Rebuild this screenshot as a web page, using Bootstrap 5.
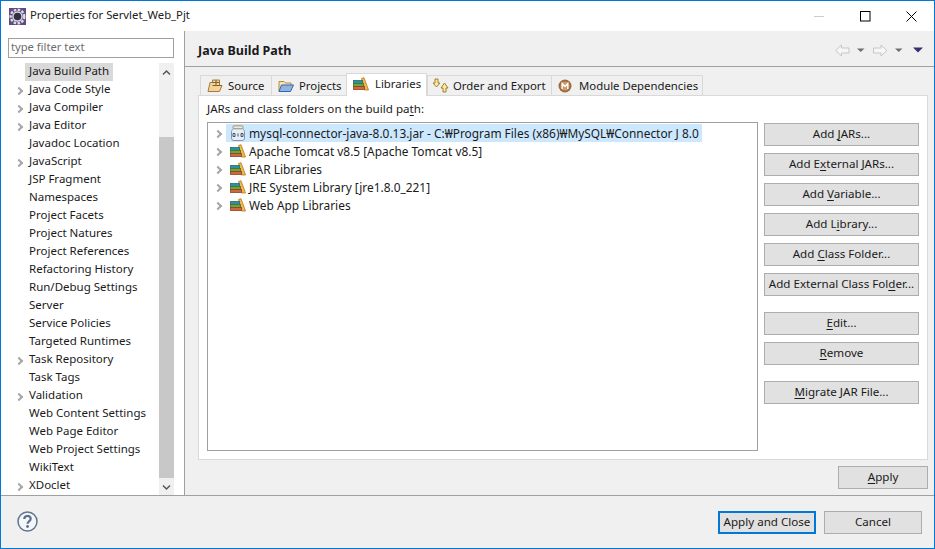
<!doctype html>
<html><head><meta charset="utf-8"><title>Properties</title>
<link href="https://cdn.jsdelivr.net/npm/bootstrap@5.3.0/dist/css/bootstrap.min.css" rel="stylesheet">
<style>
html,body{height:100%;overflow:hidden}
body{font-family:"Noto Sans","Liberation Sans",sans-serif;font-size:11.6px;color:#1a1a1a;background:#f0f0f0;line-height:18px}
.win{width:935px;height:549px;border:1px solid #0078d7}
.tbar{height:30px;background:#fff;padding-left:8px}
.ttl{margin-left:4px;margin-bottom:2px;font-size:11.3px;color:#222}
.wbtn{width:46px;height:30px}
.mainrow{height:465px;border-bottom:1px solid #a0a0a0}
.side{width:184px;background:#fff;border-right:1px solid #a0a0a0;padding:7px 10px 0 7px}
.flt{height:20px;border:1px solid #a0a0a0;padding:0 2px;font-size:11.2px;line-height:15px;color:#6d6d6d;background:#fff}
.treewrap{margin-top:5px;height:432px;overflow:hidden}
.stree{width:150px}
.srow{height:18px;line-height:16px;font-size:11.5px;white-space:nowrap;padding-left:4px;margin-left:17px;position:relative}
.srow.has::before,.trow::before{content:"";position:absolute;width:6px;height:6px;border-top:2px solid #a6a6a6;border-right:2px solid #a6a6a6;transform:rotate(45deg)}
.srow.has::before{left:-9px;top:7px}
.slbl{display:inline-block;padding:0 4px;margin-left:-4px;height:18px}
.srow.sel .slbl{background:#d9d9d9}
.sbar{width:15px;background:#f0f0f0}
.sbtn{height:18px}
.sspace{height:56px}
.sthumb{height:341px;background:#c8c8c8}
.content{flex:1;min-width:0}
.chead{height:36px;border-bottom:1px solid #a0a0a0;padding:3px 11px 0 13px}
.chead h1{font-size:12.5px;font-weight:700;margin:2px 0 0;line-height:18px}
.tabarea{padding:6px 6px 0 13px}
.tabsrow{height:22px;padding-left:2px;align-items:flex-end}
.tabx{height:20px;font-size:11.35px;border:1px solid #d9d9d9;border-bottom:0;border-right:0;display:flex;align-items:center;padding-left:6px;gap:5px;white-space:nowrap}
.tabx.act{height:23px;background:#fff;border:1px solid #d9d9d9;border-bottom:0;margin-bottom:-1px;position:relative;z-index:2;padding-bottom:3px;gap:6px}
.tw1{width:71px}.tw2{width:75px}.tw3{width:81px}
.tabx.tw4{width:124px;padding-left:4px;gap:4px}
.tabx.tw5{width:152px;border-right:1px solid #d9d9d9;gap:7px}
.panel{height:365px;background:#fff;border:1px solid #d9d9d9;padding:4px 8px 8px 8px}
.plabel{height:22px;line-height:18px}
.ul{text-decoration:underline;text-underline-offset:2px;text-decoration-thickness:1px}
.libbox{width:551px;height:329px;border:1px solid #a0a0a0;background:#fff;padding-top:1px;margin-right:6px;font-size:11.9px}
.trow{height:18px;position:relative;padding-left:18px;white-space:nowrap;display:flex;align-items:center}
.trow::before{left:7px;top:7px}
.trow .tx{display:flex;align-items:center;height:18px;padding:0 3px 0 4px;gap:3px}
.trow.sel .tx{background:#cce8ff}
.trow svg{flex:none}
.btncol{width:155px;padding-top:1px}
.ebtn{border-radius:0;background:#e1e1e1;border:1px solid #adadad;color:#1a1a1a;font-size:11.6px;line-height:15px;height:23px;padding:1px 0 3px;display:block;width:100%;white-space:nowrap;font-family:inherit}
.ebtn:hover{background:#e1e1e1;border-color:#adadad;color:#1a1a1a}
.gap7{margin-bottom:7px}
.gap16{margin-bottom:16px}
.applyrow{padding-top:6px}
.ebtn.wap{width:90px}
.foot{height:52px;padding:15px 12px 0 16px}
.ebtn.fb{width:98px}
.ebtn.def{border:2px solid #0078d7;padding:0 0 2px;margin-right:8px}
</style></head>
<body>
<svg width="0" height="0" class="position-absolute">
 <defs>
  <symbol id="books" viewBox="0 0 16 14">
   <path d="M8.500 1.500l2.500-.8 4.500 12.300h-4z" fill="#f5b84a" stroke="#b07a20" stroke-width=".8"/>
   <rect x=".5" y="3.500" width="9" height="3" fill="#2f8f9f" stroke="#266a78" stroke-width=".8"/>
   <rect x=".5" y="6.500" width="10" height="3" fill="#6aa63e" stroke="#3f7428" stroke-width=".8"/>
   <rect x=".5" y="9.500" width="11" height="3" fill="#d0683c" stroke="#8a4420" stroke-width=".8"/>
  </symbol>
 </defs>
</svg>
<div class="win d-flex flex-column">
 <div class="tbar d-flex align-items-center">
  <svg width="17" height="17" viewBox="0 0 17 17"><rect width="17" height="17" fill="#5d4a86"/><circle cx="8.500" cy="8.500" r="6.800" fill="none" stroke="#dcdcdc" stroke-width="2.400" stroke-dasharray="2.600 1.400"/><circle cx="8.500" cy="8.500" r="5.200" fill="#d8d8d8"/><circle cx="8.500" cy="8.500" r="3.800" fill="#332d45"/></svg>
  <span class="ttl">Properties for Servlet_Web_Pjt</span>
  <div class="ms-auto d-flex">
   <div class="wbtn d-flex align-items-center justify-content-center"><svg width="11" height="11"><path d="M0 5.500h10" stroke="#ccc"/></svg></div>
   <div class="wbtn d-flex align-items-center justify-content-center"><svg width="11" height="11"><rect x=".5" y=".5" width="9.500" height="9.500" fill="none" stroke="#000"/></svg></div>
   <div class="wbtn d-flex align-items-center justify-content-center"><svg width="11" height="11"><path d="M.5.500l10 10M10.500.500l-10 10" stroke="#000"/></svg></div>
  </div>
 </div>
 <div class="mainrow d-flex">
  <div class="side">
   <div class="flt">type filter text</div>
   <div class="treewrap d-flex justify-content-between">
    <div class="stree">
     <div class="srow sel"><span class="slbl">Java Build Path</span></div>
     <div class="srow has">Java Code Style</div>
     <div class="srow has">Java Compiler</div>
     <div class="srow has">Java Editor</div>
     <div class="srow">Javadoc Location</div>
     <div class="srow has">JavaScript</div>
     <div class="srow">JSP Fragment</div>
     <div class="srow">Namespaces</div>
     <div class="srow">Project Facets</div>
     <div class="srow">Project Natures</div>
     <div class="srow">Project References</div>
     <div class="srow">Refactoring History</div>
     <div class="srow">Run/Debug Settings</div>
     <div class="srow">Server</div>
     <div class="srow">Service Policies</div>
     <div class="srow">Targeted Runtimes</div>
     <div class="srow has">Task Repository</div>
     <div class="srow">Task Tags</div>
     <div class="srow has">Validation</div>
     <div class="srow">Web Content Settings</div>
     <div class="srow">Web Page Editor</div>
     <div class="srow">Web Project Settings</div>
     <div class="srow">WikiText</div>
     <div class="srow has">XDoclet</div>
    </div>
    <div class="sbar">
     <div class="sbtn d-flex align-items-center justify-content-center"><svg width="9" height="7"><path d="M1 5.500l3.500-3.500 3.500 3.500" fill="none" stroke="#555" stroke-width="1.500"/></svg></div>
     <div class="sspace"></div>
     <div class="sthumb"></div>
     <div class="sbtn d-flex align-items-center justify-content-center"><svg width="9" height="7"><path d="M1 1.500l3.500 3.500 3.500-3.500" fill="none" stroke="#555" stroke-width="1.500"/></svg></div>
    </div>
   </div>
  </div>
  <div class="content">
   <div class="chead d-flex align-items-center justify-content-between">
    <h1>Java Build Path</h1>
    <svg width="88" height="13" viewBox="0 0 88 13"><path d="M.7 6.500L6.500 1v3h7.500v5H6.500v3z" fill="#f6f6f6" stroke="#c6c6c6"/><path d="M22 4.500h7.500l-3.750 3.500z" fill="#6e6e6e"/><path d="M38.500 4H46V1l6 5.500L46 12V9h-7.500z" fill="#f6f6f6" stroke="#c6c6c6"/><path d="M60 4.500h7.500l-3.750 3.500z" fill="#6e6e6e"/><path d="M78 3.500h10l-5 5z" fill="#3d2d6e"/></svg>
   </div>
   <div class="tabarea">
    <div class="tabsrow d-flex">
     <div class="tabx tw1"><svg width="16" height="14" viewBox="0 0 16 14"><path d="M1 12.500L3 3.500h2.500V1h7v5.500h2.500l-2.500 6z" fill="#f3d39a" stroke="#a57b3a"/><path d="M5.500 3.500h7M9 1v5.500M5.500 6.500h9" stroke="#7d5f33" fill="none"/></svg>Source</div>
     <div class="tabx tw2"><svg width="16" height="14" viewBox="0 0 16 14"><path d="M1 12.500V2.500h5l1.500 1.500H13v2" fill="#f6e4b4" stroke="#b08c3c"/><path d="M1 12.500L3.500 6H15.500l-3 6.500z" fill="#8cb4e4" stroke="#3c64a4"/></svg>Projects</div>
     <div class="tabx act tw3"><svg width="16" height="14"><use href="#books"/></svg>Libraries</div>
     <div class="tabx tw4"><svg width="17" height="15" viewBox="0 0 17 15"><path d="M3 1h3v4h2L4.500 9 1 5h2z" fill="#fbeaa0" stroke="#a08030"/><path d="M11 14h3v-4h2l-3.500-5L9 10h2z" fill="#fbeaa0" stroke="#a08030"/></svg>Order and Export</div>
     <div class="tabx tw5"><svg width="14" height="14" viewBox="0 0 14 14"><circle cx="7" cy="7" r="6.500" fill="#a06a3c"/><circle cx="7" cy="7" r="4.500" fill="#c99a6a"/><path d="M4.200 10V4.500L7 7.500l2.800-3V10" fill="none" stroke="#fff" stroke-width="1.300"/></svg>Module Dependencies</div>
    </div>
    <div class="panel">
     <div class="plabel">JARs and class folders on the build pa<span class="ul">t</span>h:</div>
     <div class="d-flex">
      <div class="libbox">
       <div class="trow sel"><span class="tx"><svg width="16" height="16" viewBox="0 0 16 16"><path d="M3.500 3.500C1.500 5 1.500 6 1.500 8v5c0 1.500 1 2.500 2.500 2.500h8c1.500 0 2.500-1 2.500-2.500V8c0-2 0-3-2-4.500z" fill="#e6eef8" stroke="#8494ac"/><rect x="3" y=".8" width="10" height="3" rx="1" fill="#f0e8d0" stroke="#9a9480"/><path d="M3 8.500h2v3H3zM11 8.500h2v3h-2zM8 8.500v3" fill="none" stroke="#44546c"/></svg>mysql-connector-java-8.0.13.jar - C:₩Program Files (x86)₩MySQL₩Connector J 8.0</span></div>
       <div class="trow"><span class="tx"><svg width="16" height="14"><use href="#books"/></svg>Apache Tomcat v8.5 [Apache Tomcat v8.5]</span></div>
       <div class="trow"><span class="tx"><svg width="16" height="14"><use href="#books"/></svg>EAR Libraries</span></div>
       <div class="trow"><span class="tx"><svg width="16" height="14"><use href="#books"/></svg>JRE System Library [jre1.8.0_221]</span></div>
       <div class="trow"><span class="tx"><svg width="16" height="14"><use href="#books"/></svg>Web App Libraries</span></div>
      </div>
      <div class="btncol">
       <button class="btn ebtn gap7">Add <span class="ul">J</span>ARs...</button>
       <button class="btn ebtn gap7">Add E<span class="ul">x</span>ternal JARs...</button>
       <button class="btn ebtn gap7">Add <span class="ul">V</span>ariable...</button>
       <button class="btn ebtn gap7">Add L<span class="ul">i</span>brary...</button>
       <button class="btn ebtn gap7">Add <span class="ul">C</span>lass Folder...</button>
       <button class="btn ebtn gap16">Add External Class Fol<span class="ul">d</span>er...</button>
       <button class="btn ebtn gap7"><span class="ul">E</span>dit...</button>
       <button class="btn ebtn gap16"><span class="ul">R</span>emove</button>
       <button class="btn ebtn"><span class="ul">M</span>igrate JAR File...</button>
      </div>
     </div>
    </div>
    <div class="applyrow d-flex justify-content-end">
     <button class="btn ebtn wap"><span class="ul">A</span>pply</button>
    </div>
   </div>
  </div>
 </div>
 <div class="foot d-flex justify-content-between">
  <svg width="21" height="21" viewBox="0 0 21 21"><circle cx="10.500" cy="10.500" r="9.500" fill="#f4f6f9" stroke="#5f7590" stroke-width="1.500"/><path d="M7.300 8c0-4 6.400-4 6.400-.2 0 2.500-3.200 2.500-3.200 5" fill="none" stroke="#5a6f8a" stroke-width="2.200"/><circle cx="10.500" cy="15.500" r="1.400" fill="#5a6f8a"/></svg>
  <div class="d-flex">
   <button class="btn ebtn fb def">Apply and Close</button>
   <button class="btn ebtn fb">Cancel</button>
  </div>
 </div>
</div>
</body></html>
